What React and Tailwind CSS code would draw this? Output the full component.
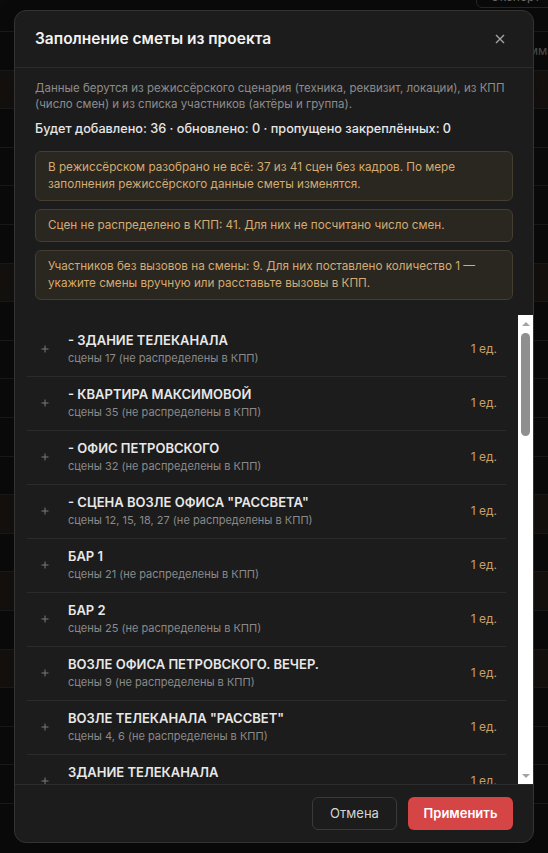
import React from "react";

const rows = [
  ["- ЗДАНИЕ ТЕЛЕКАНАЛА", "сцены 17 (не распределены в КПП)"],
  ["- КВАРТИРА МАКСИМОВОЙ", "сцены 35 (не распределены в КПП)"],
  ["- ОФИС ПЕТРОВСКОГО", "сцены 32 (не распределены в КПП)"],
  ['- СЦЕНА ВОЗЛЕ ОФИСА "РАССВЕТА"', "сцены 12, 15, 18, 27 (не распределены в КПП)"],
  ["БАР 1", "сцены 21 (не распределены в КПП)"],
  ["БАР 2", "сцены 25 (не распределены в КПП)"],
  ["ВОЗЛЕ ОФИСА ПЕТРОВСКОГО. ВЕЧЕР.", "сцены 9 (не распределены в КПП)"],
  ['ВОЗЛЕ ТЕЛЕКАНАЛА "РАССВЕТ"', "сцены 4, 6 (не распределены в КПП)"],
  ["ЗДАНИЕ ТЕЛЕКАНАЛА", "сцены 1, 2, 3 (не распределены в КПП)"],
  ["ИНТ. КАФЕ", "сцены 7 (не распределены в КПП)"],
];

const bgRows = Array.from({ length: 19 }, (_, i) => [1, 6, 12, 14, 16].includes(i + 1));

function Plus() {
  return (
    <svg width="8" height="8" viewBox="0 0 8 8" className="ml-px shrink-0">
      <path d="M4 0.5V7.5M0.5 4H7.5" stroke="#7a7a7a" strokeWidth="1" />
    </svg>
  );
}

export default function App() {
  return (
    <div className="relative h-[853px] w-full overflow-hidden bg-[#0a0a0a] font-['Inter',sans-serif]">
      {/* background page */}
      <div className="flex h-[32px] justify-end border-b border-[#1a1a1a]">
        <div className="-mr-[6px] -mt-[18px] flex h-[26px] w-[78px] items-end rounded-md border border-[#262626] pb-[2px] pl-[14px] text-[12px] leading-[16px] text-[#6b6b6b]">
          Экспорт
        </div>
      </div>
      <div className="flex h-[38.6px] items-center justify-end border-b border-[#1a1a1a] text-[12px] text-[#4d4d4d]">
        <span className="-mr-[6px]">Сумма</span>
      </div>
      {bgRows.map((r, i) => (
        <div
          key={i}
          className={
            r
              ? "h-[38.6px] border-b border-[#1a1a1a] bg-[#14100e]"
              : "h-[38.6px] border-b border-[#1a1a1a] bg-[#0a0a0a]"
          }
        />
      ))}

      {/* modal overlay */}
      <div className="absolute inset-0 flex items-center justify-center">
        <div className="flex h-[833px] w-[520px] flex-col overflow-hidden rounded-xl border border-[#333333] bg-[#1c1c1c] shadow-2xl">
          <div className="flex h-[57px] shrink-0 items-center justify-between border-b border-[#2c2c2c] px-5">
            <h2 className="text-[15.5px] font-semibold leading-6 text-[#f2f2f2]">Заполнение сметы из проекта</h2>
            <svg width="10" height="10" viewBox="0 0 10 10" className="mr-[8px]">
              <path d="M1 1L9 9M9 1L1 9" stroke="#a3a3a3" strokeWidth="1.4" />
            </svg>
          </div>

          <div className="shrink-0 px-5 pt-3">
            <p className="text-[11.5px] leading-4 text-[#8c8c8c]">
              Данные берутся из режиссёрского сценария (техника, реквизит, локации), из КПП (число смен) и из списка
              участников (актёры и группа).
            </p>
            <p className="mt-2 text-[12.7px] font-medium leading-[18px] text-[#e6e6e6]">
              Будет добавлено: 36 · обновлено: 0 · пропущено закреплённых: 0
            </p>
            <div className="mt-[13px] flex flex-col gap-2">
              <div className="rounded-md border border-[#443d30] bg-[#2a2620] px-3 py-[7px] text-[11.7px] leading-[17px] text-[#d4ab72]">
                В режиссёрском разобрано не всё: 37 из 41 сцен без кадров. По мере заполнения режиссёрского данные сметы
                изменятся.
              </div>
              <div className="rounded-md border border-[#443d30] bg-[#2a2620] px-3 py-[7px] text-[11.7px] leading-[17px] text-[#d4ab72]">
                Сцен не распределено в КПП: 41. Для них не посчитано число смен.
              </div>
              <div className="rounded-md border border-[#443d30] bg-[#2a2620] px-3 py-[7px] text-[11.7px] leading-[17px] text-[#d4ab72]">
                Участников без вызовов на смены: 9. Для них поставлено количество 1 — укажите смены вручную или
                расставьте вызовы в КПП.
              </div>
            </div>
          </div>

          <div className="mt-[15px] flex min-h-0 flex-1">
            <div className="min-w-0 flex-1 overflow-hidden px-3 pt-2">
              {rows.map(([t, s], i) => (
                <div key={i} className="flex items-center border-b border-[#2b2b2b] pb-2.5 pl-[13px] pr-[9px] pt-2">
                  <Plus />
                  <div className="ml-[19px] min-w-0 flex-1">
                    <div className="text-[13px] font-semibold leading-[18px] text-[#e8e8e8]">{t}</div>
                    <div className="mt-px text-[11px] leading-4 text-[#8a8a8a]">{s}</div>
                  </div>
                  <div className="text-[12px] leading-4 text-[#c99f68]">1 ед.</div>
                </div>
              ))}
            </div>
            <div className="flex w-[15px] shrink-0 flex-col items-center bg-white">
              <svg width="8" height="4" viewBox="0 0 8 4" className="mt-[7px]">
                <path d="M0 4L4 0L8 4Z" fill="#a3a3a3" />
              </svg>
              <div className="mt-[7px] h-[103px] w-[9px] rounded-full bg-[#8f8f8f]" />
              <div className="flex-1" />
              <svg width="8" height="4" viewBox="0 0 8 4" className="mb-[6px]">
                <path d="M0 0L4 4L8 0Z" fill="#a3a3a3" />
              </svg>
            </div>
          </div>

          <div className="flex shrink-0 justify-end gap-[11px] border-t border-[#2c2c2c] px-5 py-3">
            <button className="h-[33px] w-[85px] rounded-md border border-[#3a3a3a] bg-[#1c1c1c] text-[13px] font-normal text-[#d4d4d4]">
              Отмена
            </button>
            <button className="h-[33px] w-[105px] rounded-md bg-[#d64545] text-[13px] font-semibold text-white">
              Применить
            </button>
          </div>
        </div>
      </div>
    </div>
  );
}
